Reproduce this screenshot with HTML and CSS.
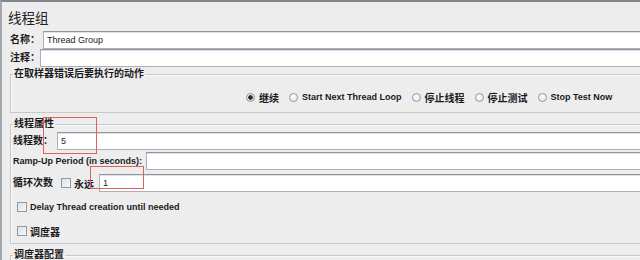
FILE: index.html
```html
<!DOCTYPE html>
<html lang="zh-CN">

<head>
    <meta charset="UTF-8">
    <title>线程组</title>
    <link rel="stylesheet" href="styles.css">
</head>

<body>
    <div class="panel">
        <div class="title">线程组</div>

        <div class="row name-row">
            <span class="label">名称：</span>
            <div class="field"><span class="lat">Thread Group</span></div>
        </div>
        <div class="row comment-row">
            <span class="label">注释：</span>
            <div class="field"></div>
        </div>

        <fieldset class="group on-error">
            <legend>在取样器错误后要执行的动作</legend>
            <div class="radios">
                <label class="radio checked"><span class="dot"></span>继续</label>
                <label class="radio"><span class="dot"></span><span class="lat">Start Next Thread Loop</span></label>
                <label class="radio"><span class="dot"></span>停止线程</label>
                <label class="radio"><span class="dot"></span>停止测试</label>
                <label class="radio"><span class="dot"></span><span class="lat">Stop Test Now</span></label>
            </div>
        </fieldset>

        <fieldset class="group props">
            <legend>线程属性</legend>
            <div class="row threads-row">
                <span class="label">线程数：</span>
                <div class="field"><span class="lat">5</span></div>
            </div>
            <div class="row ramp-row">
                <span class="label lat">Ramp-Up Period (in seconds):</span>
                <div class="field"></div>
            </div>
            <div class="row loop-row">
                <span class="label">循环次数</span>
                <label class="check"><span class="box"></span>永远</label>
                <div class="field"><span class="lat">1</span></div>
            </div>
            <label class="check delay-row"><span class="box"></span><span class="lat">Delay Thread creation until needed</span></label>
            <label class="check sched-row"><span class="box"></span>调度器</label>
        </fieldset>

        <fieldset class="group scheduler">
            <legend>调度器配置</legend>
        </fieldset>

        <!-- red annotation boxes drawn over the form -->
        <div class="mark mark-threads"></div>
        <div class="mark mark-loops"></div>
    </div>
</body>

</html>
```

FILE: styles.css
```css
body {
    margin: 0;
    background: #ededed;
    font-family: "Liberation Sans", "Noto Sans CJK SC", Arial, sans-serif;
    font-size: 10px;
    color: #1a1a1a;
    overflow: hidden;
}

.panel {
    position: relative;
    height: 258px;
    border-top: 2px solid #7f868e;
    border-left: 2px solid #a2a8ae;
    overflow: hidden;
}

.lat {
    font-size: 9px;
}

.title {
    height: 29px;
    box-sizing: border-box;
    padding: 5px 0 0 6px;
    line-height: 24px;
    font-size: 13.5px;
    color: #222;
}

.row {
    display: flex;
    align-items: center;
    height: 18px;
}

.label {
    font-weight: bold;
    line-height: 18px;
    white-space: nowrap;
}

.field {
    flex: 1;
    height: 18px;
    box-sizing: border-box;
    background: #fff;
    border: 1px solid #aab1b9;
    border-top-color: #8e969f;
    box-shadow: inset 0 1px 0 #dfe3e7;
    padding-left: 3px;
    line-height: 16px;
    color: #222;
}

.name-row {
    padding-left: 8px;
    margin-right: -4px;
}

.name-row .field {
    margin-left: 3px;
}

.comment-row {
    padding-left: 8px;
    margin-right: -4px;
}

.group {
    margin: 1px -30px 0 8px;
    padding: 0 0 8px 2px;
    border: 1px solid #c3c9cf;
    box-shadow: inset 1px 1px 0 #fafafa;
}

.group legend {
    padding: 0 1px;
    font-weight: bold;
    line-height: 12px;
}

.radios {
    display: flex;
    align-items: center;
    gap: 10px;
    height: 14px;
    margin-top: 10px;
    padding-left: 233px;
}

.radio {
    display: flex;
    align-items: center;
    gap: 4px;
    font-weight: bold;
    white-space: nowrap;
}

.radio .dot {
    width: 9px;
    height: 9px;
    box-sizing: border-box;
    border-radius: 50%;
    border: 1px solid #8b97a4;
    background: radial-gradient(circle at 40% 35%, #ffffff, #dae1e8);
}

.radio.checked .dot {
    background: radial-gradient(circle, #2b2b2b 0 2px, #e6ebf0 2.5px);
}

.props {
    margin-top: 5px;
    padding-bottom: 5px;
}

.threads-row {
    margin-top: 2px;
}

.threads-row .field {
    margin-left: 4px;
}

.ramp-row {
    margin-top: 2px;
}

.ramp-row .field {
    margin-left: 4px;
}

.loop-row {
    margin-top: 4px;
}

.loop-row .check {
    margin-left: 8px;
}

.loop-row .field {
    margin-left: 5px;
}

.check {
    display: flex;
    align-items: center;
    gap: 3px;
    font-weight: bold;
    white-space: nowrap;
    height: 14px;
}

.check .box {
    width: 10px;
    height: 10px;
    box-sizing: border-box;
    border: 1px solid #8e99a6;
    background: linear-gradient(135deg, #d9e0e8, #f7f9fb);
}

.delay-row {
    margin: 8px 0 0 4px;
}

.sched-row {
    margin: 10px 0 0 4px;
}

.scheduler {
    margin-top: 5px;
}

.mark {
    position: absolute;
    border: 1px solid #e0605c;
}

.mark-threads {
    left: 41px;
    top: 115px;
    width: 52px;
    height: 35px;
}

.mark-loops {
    left: 88px;
    top: 164px;
    width: 52px;
    height: 21px;
}
```
